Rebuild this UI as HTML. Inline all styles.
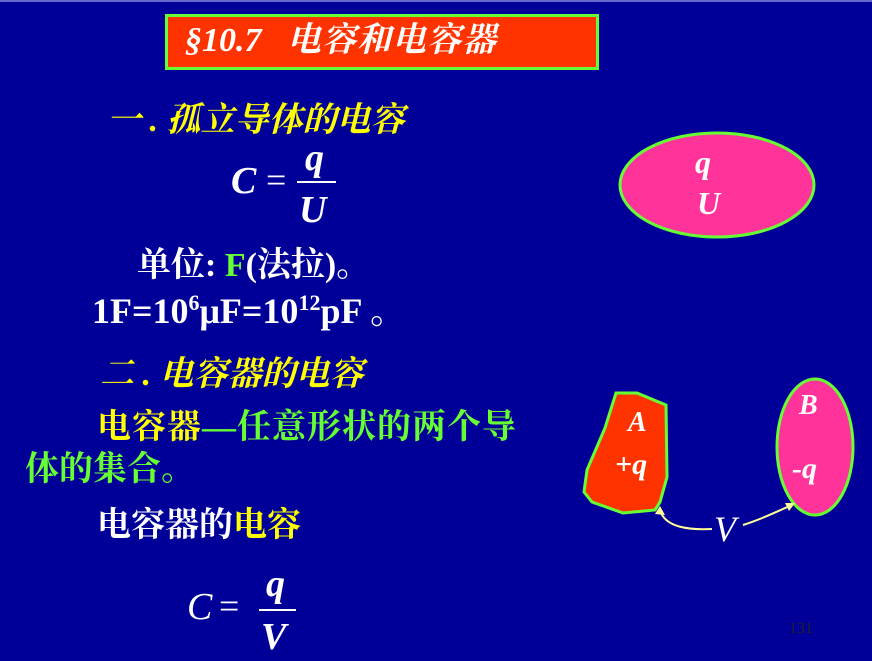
<!DOCTYPE html>
<html><head><meta charset="utf-8"><style>
body{margin:0;width:872px;height:661px;background:#000099;position:relative;overflow:hidden;font-family:"Liberation Serif","Noto Serif CJK SC",serif;}
.a{position:absolute;white-space:nowrap;line-height:1;}
.cjk{font-family:"Liberation Serif","Noto Serif CJK SC",serif;font-weight:bold;}
.y{color:#FFFF00}.w{color:#fff}.g{color:#66FF33}
.i{font-style:italic}.b{font-weight:bold}
</style></head><body>
<div class="a" style="left:0;top:0;width:872px;height:2px;background:#6666cc"></div>
<div class="a" style="left:165px;top:14px;width:428px;height:50px;background:#FF3300;border:3px solid #66FF33"></div>
<div class="a w i cjk" style="left:185px;top:24px;font-size:34px;">§10.7&nbsp;&nbsp; <span style="letter-spacing:1px">电容和电容器</span></div>
<div class="a y i cjk" style="left:107px;top:104px;font-size:34px;">一 . 孤立导体的电容</div>
<div class="a w i b" style="left:231px;top:162px;font-size:38px;">C</div>
<div class="a w" style="left:266px;top:162px;font-size:36px;">=</div>
<div class="a" style="left:297px;top:181px;width:39px;height:2px;background:#fff"></div>
<div class="a w i b" style="left:305px;top:139px;font-size:38px;">q</div>
<div class="a w i b" style="left:299px;top:191px;font-size:38px;">U</div>
<div class="a w b cjk" style="left:137px;top:249px;font-size:34px;">单位: <span class="g">F</span>(法拉)。</div>
<div class="a w b" style="left:92px;top:292px;font-size:36px;">1F=10<sup style="font-size:22px;vertical-align:13px">6</sup>μF=10<sup style="font-size:22px;vertical-align:13px">12</sup>pF 。</div>
<div class="a y i cjk" style="left:100px;top:358px;font-size:34px;">二 . 电容器的电容</div>
<div class="a g cjk" style="left:97px;top:411px;font-size:34px;letter-spacing:1px"><span class="y">电容器</span>—任意形状的两个导</div>
<div class="a g cjk" style="left:25px;top:453px;font-size:34px;">体的集合。</div>
<div class="a w cjk" style="left:97px;top:509px;font-size:34px;">电容器的<span class="y">电容</span></div>
<div class="a w i" style="left:187px;top:588px;font-size:38px;">C</div>
<div class="a w" style="left:219px;top:588px;font-size:36px;">=</div>
<div class="a" style="left:259px;top:609px;width:37px;height:2px;background:#fff"></div>
<div class="a w i b" style="left:266px;top:565px;font-size:38px;">q</div>
<div class="a w i b" style="left:261px;top:618px;font-size:38px;">V</div>
<div class="a" style="left:789px;top:621px;font-size:16px;color:#222;">131</div>
<svg class="a" style="left:0;top:0" width="872" height="661">
<ellipse cx="717" cy="185" rx="97" ry="52" fill="#FF3399" stroke="#66FF33" stroke-width="3"/>
<polygon points="616,393 637,393 666,405 667,477 660,502 655,510 623,513 592,502 584,492 587,470 605,428" fill="#FF3300" stroke="#66FF33" stroke-width="3"/>
<ellipse cx="815" cy="447" rx="38" ry="68" fill="#FF3399" stroke="#66FF33" stroke-width="3"/>
<path d="M712 529 C690 530 665 528 660 510" fill="none" stroke="#ffff99" stroke-width="2"/>
<path d="M655 514 L660 506 L665 515" fill="#ffff99"/>
<path d="M743 525 C765 518 780 510 792 505" fill="none" stroke="#ffff99" stroke-width="2"/>
<path d="M785 503 L795 503 L789 511Z" fill="#ffff99"/>
<g fill="#fff" font-family="Liberation Serif,serif" font-style="italic" font-weight="bold">
<text x="695" y="173" font-size="32">q</text>
<text x="697" y="214" font-size="32">U</text>
<text x="628" y="431" font-size="28">A</text>
<text x="615" y="474" font-size="30">+q</text>
<text x="799" y="414" font-size="28">B</text>
<text x="792" y="478" font-size="30">-q</text>
<text x="714" y="541" font-size="36" font-weight="normal">V</text>
</g>
</svg>
</body></html>
